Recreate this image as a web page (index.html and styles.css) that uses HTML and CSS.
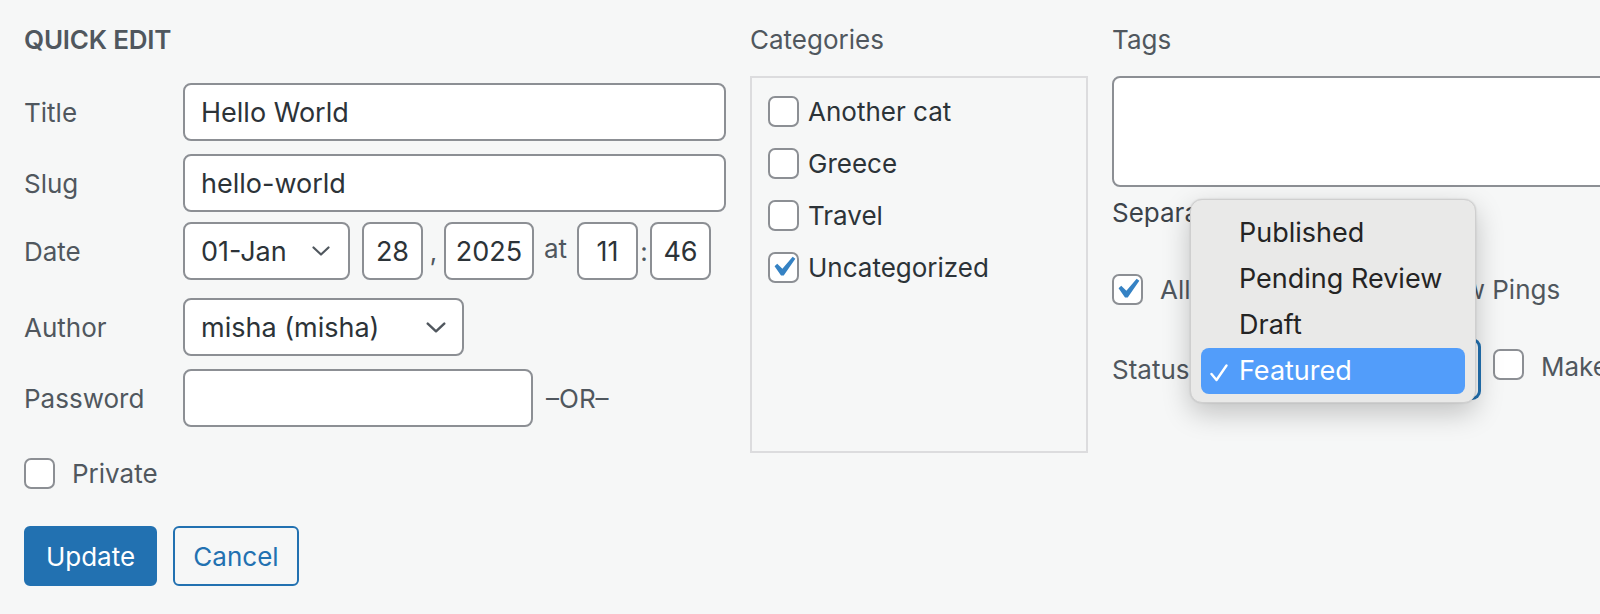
FILE: index.html
```html
<!DOCTYPE html>
<html lang="en">
<head>
<meta charset="utf-8">
<title>Quick Edit</title>
<link rel="stylesheet" href="styles.css">
</head>
<body>
<div class="page">
  <div class="col col-main">
    <h2 class="heading">QUICK EDIT</h2>
    <div class="row row-title">
      <span class="lbl">Title</span>
      <input class="field w-title" type="text" value="Hello World">
    </div>
    <div class="row row-slug">
      <span class="lbl">Slug</span>
      <input class="field w-title" type="text" value="hello-world">
    </div>
    <div class="row row-date">
      <span class="lbl">Date</span>
      <div class="field select w-month">
        <span>01-Jan</span>
        <svg class="chev" viewBox="0 0 18 10" width="18" height="10"><polyline points="1.5,1.5 9,8.5 16.5,1.5" fill="none" stroke="#50575e" stroke-width="2.2" stroke-linecap="round" stroke-linejoin="round"/></svg>
      </div>
      <input class="field num w-day" type="text" value="28">
      <span class="sep sep-comma">,</span>
      <input class="field num w-year" type="text" value="2025">
      <span class="sep sep-at">at</span>
      <input class="field num w-hour" type="text" value="11">
      <span class="sep sep-colon">:</span>
      <input class="field num w-hour" type="text" value="46">
    </div>
    <div class="row row-author">
      <span class="lbl">Author</span>
      <div class="field select w-author">
        <span>misha (misha)</span>
        <svg class="chev" viewBox="0 0 18 10" width="20" height="11"><polyline points="1.5,1.5 9,8.5 16.5,1.5" fill="none" stroke="#50575e" stroke-width="2.2" stroke-linecap="round" stroke-linejoin="round"/></svg>
      </div>
    </div>
    <div class="row row-pass">
      <span class="lbl">Password</span>
      <input class="field w-pass" type="text" value="">
      <span class="or">–OR–</span>
    </div>
    <div class="row-private">
      <span class="cb"></span>
      <span class="cb-text">Private</span>
    </div>
    <div class="buttons">
      <button class="btn btn-primary">Update</button>
      <button class="btn btn-secondary">Cancel</button>
    </div>
  </div>

  <div class="col col-cats">
    <div class="col-title">Categories</div>
    <ul class="cat-list">
      <li><span class="cb"></span><span class="cat-text">Another cat</span></li>
      <li><span class="cb"></span><span class="cat-text">Greece</span></li>
      <li><span class="cb"></span><span class="cat-text">Travel</span></li>
      <li><span class="cb checked"><svg class="tick" viewBox="0 0 20 20"><path d="M14.83 4.89l1.34.94-5.81 8.38H9.02L5.78 9.67l1.34-1.25 2.57 2.4z" fill="#3582c4"/></svg></span><span class="cat-text">Uncategorized</span></li>
    </ul>
  </div>

  <div class="col col-tags">
    <div class="col-title">Tags</div>
    <div class="tags-area"></div>
    <div class="hint">Separate tags with commas</div>
    <div class="allow-row">
      <div class="allow allow-comments">
        <span class="cb checked"><svg class="tick" viewBox="0 0 20 20"><path d="M14.83 4.89l1.34.94-5.81 8.38H9.02L5.78 9.67l1.34-1.25 2.57 2.4z" fill="#3582c4"/></svg></span>
        <span class="cb-text">Allow Comments</span>
      </div>
      <div class="allow">
        <span class="cb"></span>
        <span class="cb-text">Allow Pings</span>
      </div>
    </div>
    <div class="status-row">
      <span class="status-lbl">Status</span>
      <div class="field select status-select"><span>Featured</span></div>
      <span class="cb sticky-cb"></span>
      <span class="cb-text sticky-text">Make this post sticky</span>
    </div>
  </div>
</div>

<div class="menu">
  <div class="menu-item">Published</div>
  <div class="menu-item">Pending Review</div>
  <div class="menu-item">Draft</div>
  <div class="menu-item active">
    <svg class="menu-check" viewBox="0 0 18 18" width="18" height="18"><polyline points="1.5,10 6.5,16 16.5,1.5" fill="none" stroke="#ffffff" stroke-width="2.4" stroke-linecap="round" stroke-linejoin="round"/></svg>
    Featured
  </div>
</div>
</body>
</html>
```

FILE: styles.css
```css
* { box-sizing: border-box; }

html, body {
  margin: 0;
  padding: 0;
}

body {
  width: 1600px;
  height: 614px;
  overflow: hidden;
  position: relative;
  background: #f6f7f7;
  font-family: Inter, "Noto Sans", "Liberation Sans", sans-serif;
  color: #50575e;
}

.page {
  display: flex;
  gap: 24px;
  padding: 20px 0 0 24px;
}

.col { flex: none; }
.col-main { width: 702px; }
.col-cats { width: 338px; }
.col-tags { width: 620px; }

.heading {
  margin: 0 0 23px;
  height: 40px;
  line-height: 40px;
  font-size: 26px;
  font-weight: 600;
  color: #50575e;
  letter-spacing: -0.2px;
}

.col-title {
  height: 40px;
  line-height: 40px;
  font-size: 26px;
  margin-bottom: 16px;
  color: #50575e;
}

.row {
  display: flex;
  align-items: center;
  height: 58px;
}
.row-slug { margin-top: 13px; }
.row-date { margin-top: 10px; }
.row-author { margin-top: 18px; }
.row-pass { margin-top: 13px; }

.lbl {
  width: 159px;
  flex: none;
  font-size: 26px;
  color: #50575e;
}

.field {
  height: 58px;
  border: 2px solid #8c8f94;
  border-radius: 8px;
  background: #fff;
  font-family: Inter, "Noto Sans", "Liberation Sans", sans-serif;
  font-size: 27px;
  color: #2c3338;
  padding: 0 16px;
  outline: none;
  margin: 0;
  flex: none;
}

.w-title { width: 543px; }
.w-pass { width: 350px; }

.select {
  display: flex;
  align-items: center;
  justify-content: space-between;
}
.w-month { width: 167px; padding-right: 18px; }
.w-author { width: 281px; padding-right: 16px; }

.num {
  text-align: center;
  padding: 0;
}
.w-day { width: 61px; margin-left: 12px; }
.w-year { width: 90px; }
.w-hour { width: 61px; }

.sep {
  flex: none;
  text-align: center;
  font-size: 26px;
  color: #50575e;
}
.sep-comma { width: 21px; }
.sep-at { width: 43px; margin-top: -6px; }
.sep-colon { width: 12px; }

.or {
  margin-left: 13px;
  font-size: 26px;
  color: #50575e;
}

.cb {
  position: relative;
  display: inline-block;
  flex: none;
  width: 31px;
  height: 31px;
  border: 2px solid #8c8f94;
  border-radius: 7px;
  background: #fff;
}

.tick {
  position: absolute;
  left: -7px;
  top: -7px;
  width: 40px;
  height: 40px;
}

.cb-text {
  font-size: 26px;
  color: #50575e;
  white-space: nowrap;
}

.row-private {
  display: flex;
  align-items: center;
  gap: 17px;
  margin-top: 31px;
  height: 31px;
}

.buttons {
  display: flex;
  gap: 16px;
  margin-top: 37px;
}

.btn {
  height: 60px;
  border-radius: 6px;
  font-family: Inter, "Noto Sans", "Liberation Sans", sans-serif;
  font-size: 26px;
  padding: 0;
  border: 2px solid #2271b1;
  cursor: pointer;
}
.btn-primary {
  width: 133px;
  background: #2271b1;
  color: #fff;
}
.btn-secondary {
  width: 126px;
  background: #f6f7f7;
  color: #2271b1;
}

.cat-list {
  list-style: none;
  margin: 0;
  height: 377px;
  padding: 7px 16px;
  border: 2px solid #dcdcde;
}
.cat-list li {
  display: flex;
  align-items: center;
  gap: 9px;
  height: 52px;
}
.cat-text {
  font-size: 26px;
  color: #2c3338;
}

.tags-area {
  height: 111px;
  border: 2px solid #8c8f94;
  border-radius: 8px;
  background: #fff;
}

.hint {
  margin-top: 8px;
  height: 36px;
  line-height: 36px;
  font-size: 26px;
  color: #3c434a;
}

.allow-row {
  display: flex;
  margin-top: 43px;
  height: 31px;
}
.allow {
  display: flex;
  align-items: center;
  gap: 17px;
}
.allow-comments { width: 258px; }

.status-row {
  display: flex;
  align-items: center;
  margin-top: 34px;
  height: 60px;
}
.status-lbl {
  width: 84px;
  flex: none;
  font-size: 26px;
  color: #50575e;
}
.status-select {
  width: 284px;
  height: 60px;
  border-color: #2271b1;
  box-shadow: 0 0 0 1px #2271b1;
}
.sticky-cb { margin-left: 13px; margin-top: -9px; }
.sticky-text { margin-left: 17px; margin-top: -6px; }

.menu {
  position: absolute;
  left: 1190px;
  top: 199px;
  width: 286px;
  height: 204px;
  padding: 10px;
  background: #e9e9e8;
  border: 1px solid #cfcfcf;
  border-radius: 12px;
  box-shadow: 0 10px 28px rgba(0, 0, 0, 0.22), 0 0 2px rgba(0, 0, 0, 0.15);
}

.menu-item {
  position: relative;
  height: 46px;
  line-height: 46px;
  padding-left: 38px;
  font-size: 27px;
  color: #242424;
  border-radius: 8px;
  white-space: nowrap;
}
.menu-item.active {
  background: #529dfa;
  color: #fff;
}
.menu-check {
  position: absolute;
  left: 9px;
  top: 16px;
}
```
